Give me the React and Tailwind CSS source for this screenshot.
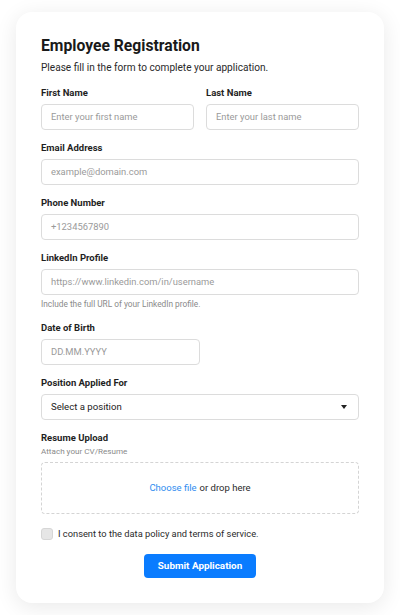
import React from "react";

const font = { fontFamily: 'Roboto, "Noto Sans", sans-serif' };

function Label({ children }) {
  return (
    <div className="text-[9.5px] leading-[16px] font-bold text-[#1f1f1f]">{children}</div>
  );
}

function Input({ placeholder, className = "" }) {
  return (
    <div
      className={`mt-[3px] h-[26px] rounded-[4px] border border-[#dcdcdc] bg-white px-[9px] flex items-center text-[9.4px] text-[#9a9a9a] ${className}`}
    >
      {placeholder}
    </div>
  );
}

export default function App() {
  return (
    <div className="min-h-[615px] bg-white pl-4 pt-3 pb-3" style={font}>
      <div className="w-[368px] rounded-[16px] bg-white shadow-[0_4px_22px_rgba(0,0,0,0.09)] px-[25px] pt-[23px] pb-[25px]">
        <h1 className="text-[15.7px] leading-[22px] font-bold text-[#1a1a1a]">Employee Registration</h1>
        <p className="mt-[3px] text-[10.1px] leading-[16px] text-[#2a2a2a]">
          Please fill in the form to complete your application.
        </p>

        <div className="mt-[9px] grid grid-cols-2 gap-x-[12px]">
          <div>
            <Label>First Name</Label>
            <Input placeholder="Enter your first name" />
          </div>
          <div>
            <Label>Last Name</Label>
            <Input placeholder="Enter your last name" />
          </div>
        </div>

        <div className="mt-[10px]">
          <Label>Email Address</Label>
          <Input placeholder="example@domain.com" />
        </div>

        <div className="mt-[10px]">
          <Label>Phone Number</Label>
          <Input placeholder="+1234567890" />
        </div>

        <div className="mt-[10px]">
          <Label>LinkedIn Profile</Label>
          <Input placeholder="https://www.linkedin.com/in/username" />
          <div className="mt-[3px] text-[8.3px] leading-[12px] text-[#8a8a8a]">
            Include the full URL of your LinkedIn profile.
          </div>
        </div>

        <div className="mt-[10px]">
          <Label>Date of Birth</Label>
          <Input placeholder="DD.MM.YYYY" className="w-[159px]" />
        </div>

        <div className="mt-[10px]">
          <Label>Position Applied For</Label>
          <div className="mt-[3px] h-[26px] rounded-[4px] border border-[#dcdcdc] bg-white px-[9px] flex items-center justify-between text-[9.6px] text-[#222]">
            <span>Select a position</span>
            <svg width="6" height="4" viewBox="0 0 6 4" className="mr-[2px]">
              <path d="M0 0 L6 0 L3 4 Z" fill="#222" />
            </svg>
          </div>
        </div>

        <div className="mt-[10px]">
          <Label>Resume Upload</Label>
          <div className="text-[8.1px] leading-[11px] text-[#8a8a8a]">Attach your CV/Resume</div>
          <div className="mt-[5px] h-[52px] rounded-[4px] border border-dashed border-[#d4d4d4] flex items-center justify-center text-[9.5px]">
            <span className="text-[#2f8cf0]">Choose file</span>
            <span className="ml-[3px] text-[#2a2a2a]">or drop here</span>
          </div>
        </div>

        <div className="mt-[12px] flex items-center h-[16px]">
          <div className="w-[12px] h-[12px] rounded-[3px] border border-[#d6d6d6] bg-[#e6e6e6]" />
          <span className="ml-[5px] text-[9.3px] text-[#2a2a2a]">
            I consent to the data policy and terms of service.
          </span>
        </div>

        <div className="mt-[12px] flex justify-center">
          <button className="h-[24px] w-[112px] rounded-[4px] bg-[#0a7cff] text-white text-[9.9px] font-bold">
            Submit Application
          </button>
        </div>
      </div>
    </div>
  );
}
